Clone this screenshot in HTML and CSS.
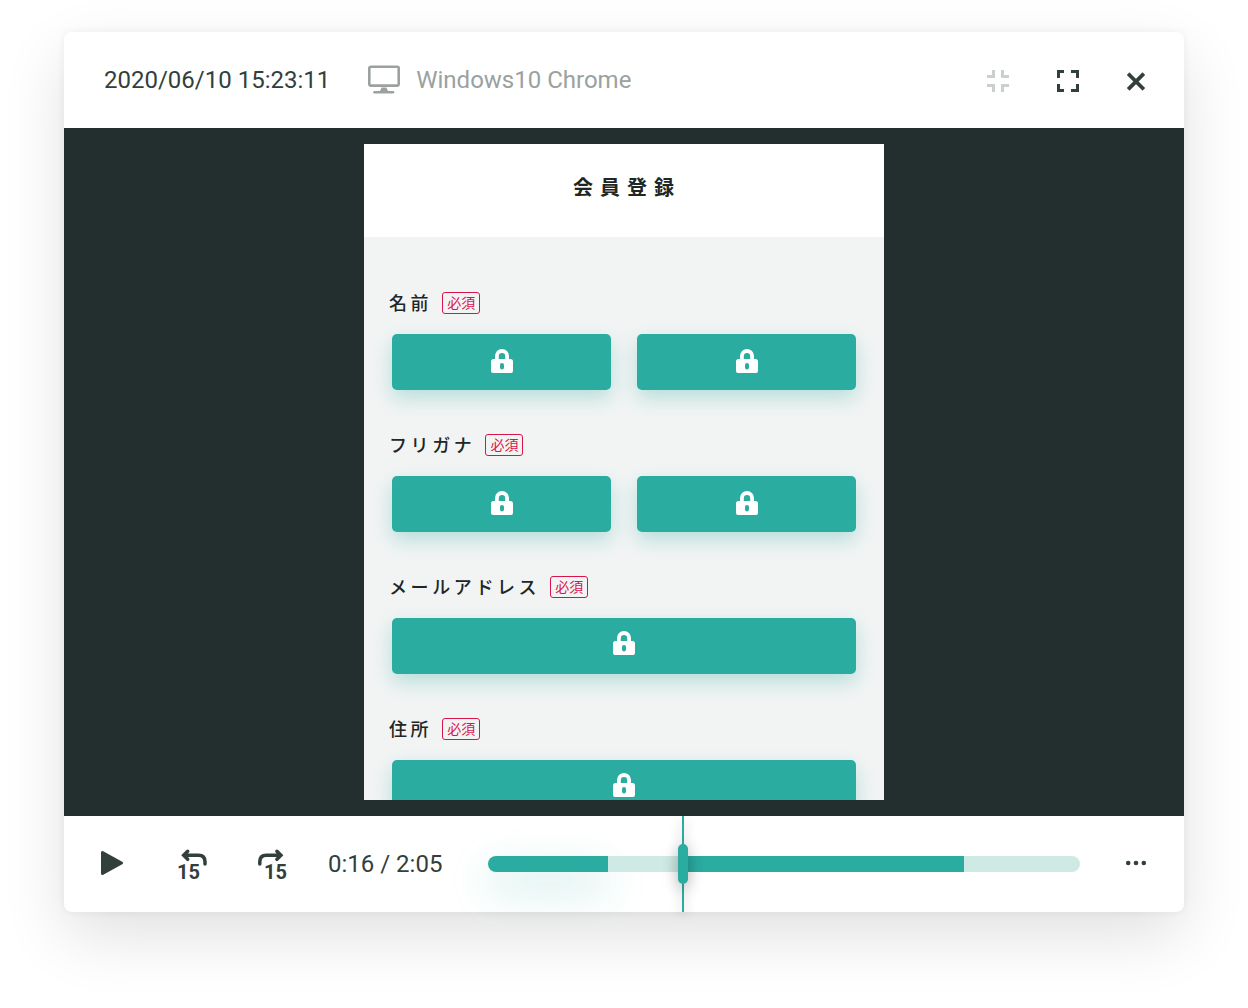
FILE: index.html
```html
<!DOCTYPE html>
<html lang="ja">
<head>
<meta charset="utf-8">
<meta name="viewport" content="width=device-width, initial-scale=1">
<title>2020/06/10 15:23:11</title>
<link rel="stylesheet" href="styles.css">
</head>
<body>
<svg class="defs" aria-hidden="true">
  <symbol id="lock" viewBox="0 0 22 24">
    <path fill="currentColor" fill-rule="evenodd" d="M4 10V7a7 7 0 0 1 14 0v3h1.500a2.500 2.500 0 0 1 2.500 2.500V22a2 2 0 0 1-2 2H2a2 2 0 0 1-2-2v-9.500A2.500 2.500 0 0 1 2.500 10zM7.800 10h6.400V7.200a3.200 3.200 0 0 0-6.400 0zM11 14a2 2 0 0 0-2 2v2.400a2 2 0 0 0 4 0V16a2 2 0 0 0-2-2z"/>
  </symbol>
</svg>
<main class="player">
  <header class="player-header">
    <time class="recorded" datetime="2020-06-10T15:23:11">2020/06/10 15:23:11</time>
    <div class="device">
      <svg width="32" height="32" viewBox="0 0 32 32" aria-hidden="true">
        <rect x="1.300" y="2.800" width="29.400" height="18.800" rx="1.500" fill="none" stroke="currentColor" stroke-width="2.600"/>
        <path fill="currentColor" d="M13.500 23.500h5q.5 3 2.500 4h-10q2-1 2.500-4z"/>
        <path d="M6.500 28.300h18.500" stroke="currentColor" stroke-width="2.600" stroke-linecap="round"/>
      </svg>
      <span>Windows10 Chrome</span>
    </div>
    <div class="window-actions">
      <button class="icon-button" type="button" disabled aria-label="縮小">
        <svg width="32" height="32" viewBox="0 0 32 32"><path d="M5 12.500h6.500V6M27 12.500h-6.500V6M5 21.500h6.500V28M27 21.500h-6.500V28" fill="none" stroke="currentColor" stroke-width="3"/></svg>
      </button>
      <button class="icon-button" type="button" aria-label="全画面">
        <svg width="32" height="32" viewBox="0 0 32 32"><path d="M13 7.500H7.500V14M20 7.500h6.500V14M7.500 20v6.500H13M20 26.500h6.500V20" fill="none" stroke="currentColor" stroke-width="3"/></svg>
      </button>
      <button class="icon-button" type="button" aria-label="閉じる">
        <svg width="32" height="32" viewBox="0 0 32 32"><path d="M9.500 11l13 13M22.500 11l-13 13" fill="none" stroke="currentColor" stroke-width="3.800" stroke-linecap="square"/></svg>
      </button>
    </div>
  </header>

  <section class="stage">
    <form class="screen">
      <h1 class="screen-title">会員登録</h1>
      <div class="fields">
        <div class="field">
          <div class="field-label"><label for="name">名前</label><span class="required">必須</span></div>
          <div class="masks">
            <button class="mask" id="name" type="button"><svg width="22" height="24"><use href="#lock"/></svg></button>
            <button class="mask" type="button" aria-label="名前"><svg width="22" height="24"><use href="#lock"/></svg></button>
          </div>
        </div>
        <div class="field">
          <div class="field-label"><label for="kana">フリガナ</label><span class="required">必須</span></div>
          <div class="masks">
            <button class="mask" id="kana" type="button"><svg width="22" height="24"><use href="#lock"/></svg></button>
            <button class="mask" type="button" aria-label="フリガナ"><svg width="22" height="24"><use href="#lock"/></svg></button>
          </div>
        </div>
        <div class="field">
          <div class="field-label"><label for="mail">メールアドレス</label><span class="required">必須</span></div>
          <div class="masks">
            <button class="mask mask-wide" id="mail" type="button"><svg width="22" height="24"><use href="#lock"/></svg></button>
          </div>
        </div>
        <div class="field">
          <div class="field-label"><label for="address">住所</label><span class="required">必須</span></div>
          <div class="masks">
            <button class="mask mask-wide" id="address" type="button"><svg width="22" height="24"><use href="#lock"/></svg></button>
          </div>
        </div>
      </div>
    </form>
  </section>

  <footer class="controls">
    <div class="transport">
      <button class="icon-button" type="button" aria-label="再生">
        <svg width="32" height="32" viewBox="0 0 32 32"><path d="M6.500 4.500v21L25.500 15z" fill="currentColor" stroke="currentColor" stroke-width="3" stroke-linejoin="round"/></svg>
      </button>
      <button class="icon-button" type="button" aria-label="15秒戻る">
        <svg width="32" height="32" viewBox="0 0 32 32"><path d="M8 7.300h14.500q6.500 0 6.500 6.500V16M11.700 3.300l-4 4 4 4" fill="none" stroke="currentColor" stroke-width="3.500" stroke-linecap="round"/><text class="skip" x="1" y="31">15</text></svg>
      </button>
      <button class="icon-button" type="button" aria-label="15秒進む">
        <svg width="32" height="32" viewBox="0 0 32 32"><path d="M24.500 7.300H10.300q-6.500 0-6.500 6.500V16M20.900 3.300l4 4-4 4" fill="none" stroke="currentColor" stroke-width="3.500" stroke-linecap="round"/><text class="skip" x="8" y="31">15</text></svg>
      </button>
    </div>
    <div class="clock">0:16 / 2:05</div>
    <div class="timeline">
      <div class="track">
        <span class="segment segment-glow" style="width:20.270%"></span>
        <span class="segment segment-idle" style="width:12.670%"></span>
        <span class="segment" style="width:47.470%"></span>
        <span class="segment segment-idle segment-rest"></span>
      </div>
      <span class="playhead" style="left:33%"></span>
      <input class="seek" type="range" min="0" max="125" step="any" value="40.800" aria-label="再生位置">
    </div>
    <button class="icon-button" type="button" aria-label="メニュー">
      <svg width="32" height="32" viewBox="0 0 32 32"><g fill="currentColor"><circle cx="8.200" cy="15" r="2.300"/><circle cx="16" cy="15" r="2.300"/><circle cx="23.800" cy="15" r="2.300"/></g></svg>
    </button>
  </footer>
</main>
</body>
</html>
```

FILE: styles.css
```css
:root {
  --ink: #333f3d;
  --muted: #9aa1a0;
  --teal: #2aaca0;
  --teal-light: #cfe9e5;
  --stage: #232f2f;
  --paper: #f2f4f4;
  --red: #d9144a;
}

* {
  box-sizing: border-box;
}

body {
  margin: 0;
  padding: 32px 64px 96px;
  background: #fff;
  color: var(--ink);
  font-family: Roboto, "Noto Sans CJK JP", sans-serif;
  font-size: 24px;
  line-height: 32px;
}

.defs {
  display: none;
}

.player {
  background: #fff;
  border-radius: 8px;
  box-shadow: 0 0 8px rgba(0, 0, 0, 0.06), 0 24px 64px rgba(0, 0, 0, 0.12);
}

.player-header,
.controls {
  display: flex;
  align-items: center;
  gap: 40px;
  height: 96px;
  padding: 0 32px;
}

.player-header {
  gap: 38px;
  padding-left: 40px;
}

.device {
  display: flex;
  gap: 16px;
  color: var(--muted);
}

.window-actions {
  display: flex;
  gap: 37px;
  margin-left: auto;
}

.icon-button {
  flex: none;
  width: 32px;
  height: 32px;
  padding: 0;
  border: 0;
  background: none;
  color: var(--ink);
}

.icon-button:disabled {
  color: #cccfcf;
}

.icon-button svg {
  display: block;
  overflow: visible;
}

.skip {
  fill: currentColor;
  font: 700 20px Roboto, sans-serif;
}

.stage {
  padding: 16px;
  background: var(--stage);
}

.screen {
  max-width: 520px;
  height: 656px;
  margin: 0 auto;
  overflow: hidden;
  background: var(--paper);
  color: #212625;
  font-family: "Noto Sans CJK JP", sans-serif;
}

.screen-title {
  margin: 0;
  padding: 27px 0 34px 6px;
  background: #fff;
  font-size: 20px;
  font-weight: 700;
  letter-spacing: 7px;
  line-height: 32px;
  text-align: center;
}

.fields {
  display: grid;
  gap: 44px;
  padding: 55px 28px 0;
}

.field {
  display: grid;
  gap: 20px;
}

.field-label {
  display: flex;
  align-items: flex-start;
  gap: 10px;
  height: 22px;
  margin-left: -3px;
  font-size: 18px;
  font-weight: 500;
  letter-spacing: 0.2em;
  line-height: 20px;
}

.required {
  padding: 0 4px 2px;
  border: 1px solid var(--red);
  border-radius: 3px;
  color: var(--red);
  font-size: 14px;
  font-weight: 400;
  letter-spacing: 0;
  line-height: 18px;
}

.masks {
  display: flex;
  gap: 26px;
}

.mask {
  display: flex;
  flex: 1;
  align-items: center;
  justify-content: center;
  height: 56px;
  padding: 0 0 2px;
  border: 0;
  border-radius: 5px;
  background: var(--teal);
  box-shadow: 0 8px 20px rgba(42, 172, 160, 0.3);
  color: #fff;
}

.mask-wide {
  padding-bottom: 6px;
}

.transport {
  display: flex;
  gap: 48px;
}

.clock {
  min-width: 120px;
}

.timeline {
  position: relative;
  display: flex;
  flex: 1;
  align-items: center;
  height: 96px;
}

.track {
  display: flex;
  flex: 1;
  height: 16px;
}

.segment {
  background: var(--teal);
}

.segment-glow {
  border-radius: 8px 0 0 8px;
  box-shadow: 0 16px 40px rgba(42, 172, 160, 0.3);
}

.segment-idle {
  background: var(--teal-light);
}

.segment-rest {
  flex: 1;
  border-radius: 0 8px 8px 0;
}

.playhead {
  position: absolute;
  top: 0;
  bottom: 0;
  width: 2px;
  margin-left: -1px;
  background: var(--teal);
  box-shadow: 0 4px 12px rgba(0, 0, 0, 0.3);
}

.seek {
  position: absolute;
  inset: 28px 0;
  width: 100%;
  height: 40px;
  margin: 0;
  appearance: none;
  background: none;
}

.seek::-webkit-slider-thumb {
  appearance: none;
  width: 10px;
  height: 40px;
  border-radius: 5px;
  background: var(--teal);
  box-shadow: 0 4px 16px rgba(0, 0, 0, 0.3);
}
```
